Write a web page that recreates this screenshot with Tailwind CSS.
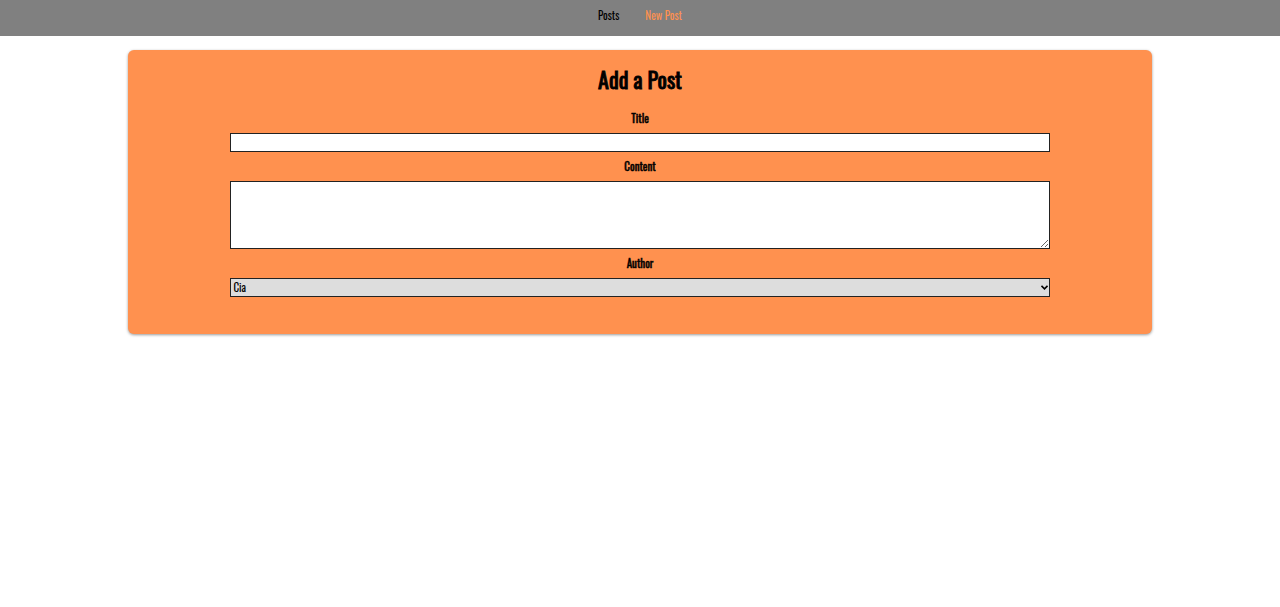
<!DOCTYPE html>
<html lang="en">
<head>
<meta charset="utf-8">
<meta name="viewport" content="width=device-width, initial-scale=1">
<title>Add a Post</title>
<script src="https://cdn.jsdelivr.net/npm/@tailwindcss/browser@4"></script>
</head>
<body class="min-h-screen bg-white font-['Oswald','Liberation_Sans_Narrow','Roboto_Condensed','Liberation_Sans',sans-serif] text-[11px] font-normal text-black">
<header class="h-9 bg-[#808080]">
  <nav class="flex justify-center gap-[26px] pt-[5px] leading-5">
    <a href="#posts">Posts</a>
    <a href="#new" class="text-[#ff914f]">New Post</a>
  </nav>
</header>
<main class="pb-4">
  <section class="mx-auto mt-[14px] w-4/5 rounded-md bg-[#ff914f] pt-[13px] pb-[37px] shadow-[0_1px_3px_rgba(0,0,0,0.4)]">
    <h2 class="mb-[9px] text-center text-[22px] leading-8 [-webkit-text-stroke:0.04em_black]">Add a Post</h2>
    <form class="mx-auto flex w-4/5 flex-col">
      <label for="title" class="mt-1 mb-[5px] text-center leading-5 [-webkit-text-stroke:0.04em_black]">Title</label>
      <input id="title" type="text" class="h-[19px] w-full border border-[#222222] bg-white px-px outline-none">
      <label for="content" class="mt-1 mb-[5px] text-center leading-5 [-webkit-text-stroke:0.04em_black]">Content</label>
      <textarea id="content" class="h-[68px] w-full resize border border-[#222222] bg-white p-px outline-none"></textarea>
      <label for="author" class="mt-1 mb-[5px] text-center leading-5 [-webkit-text-stroke:0.04em_black]">Author</label>
      <div class="relative">
        <select id="author" class="block h-[19px] w-full appearance-none border border-[#222222] bg-[#dddddd] pb-[2px] pl-[2px] leading-4 outline-none">
          <option>Cia</option>
        </select>
        <svg class="pointer-events-none absolute top-[7px] right-[2px] h-[5px] w-[7px]" viewBox="0 0 7 5" fill="none" stroke="black" stroke-width="1.6" aria-hidden="true"><path d="M0.5 0.8L3.5 3.8L6.5 0.8"/></svg>
      </div>
    </form>
  </section>
</main>
</body>
</html>
